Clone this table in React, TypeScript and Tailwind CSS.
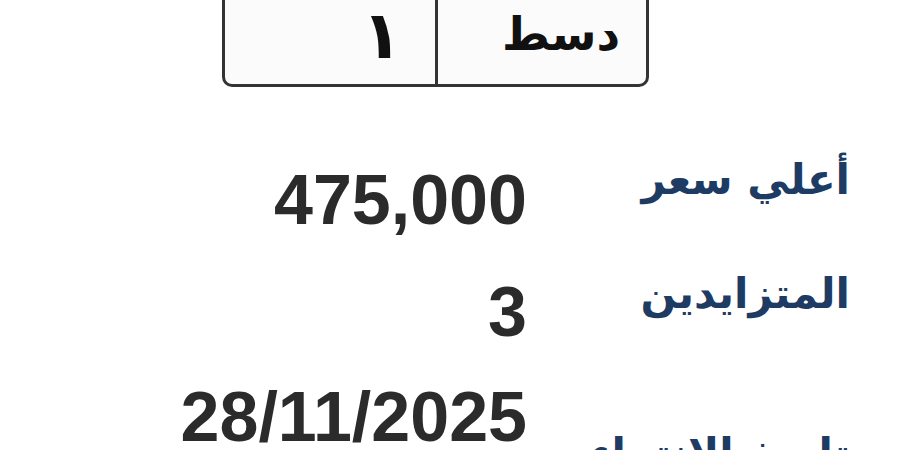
const rows = [
  { label: "أعلي سعر", value: "475,000", h: "h-[112px]", lpt: "pt-[20px]" },
  { label: "المتزايدين", value: "3", h: "h-[105px]", lpt: "pt-[22px]" },
  { label: "تاريخ الانتهاء", value: "28/11/2025", h: "h-[120px]", lpt: "pt-[77px]" },
];

const App = () => {
  return (
    <div className="w-[900px] h-[450px] overflow-hidden bg-white font-['Liberation_Sans',sans-serif]">
      {/* plate */}
      <div className="ml-[222px] -mt-[30px] w-[427px] h-[117px] flex border-[3px] border-[#333] rounded-b-[10px] bg-[#fbfbfb]">
        <div className="w-[210px] h-full flex items-center justify-center pl-[104px] pt-[14px]">
          <span className="font-['DejaVu_Sans',sans-serif] font-bold text-[66px] leading-none text-[#111]">
            ١
          </span>
        </div>
        <div className="w-[3px] h-full bg-[#333]" />
        <div dir="rtl" className="flex-1 h-full flex items-center pr-[26px] pt-[10px]">
          <span className="font-['DejaVu_Sans',sans-serif] font-bold text-[46px] leading-none text-[#111]">
            دسط
          </span>
        </div>
      </div>

      {/* details */}
      <div className="mt-[52px] flex flex-col">
        {rows.map((r) => (
          <div key={r.label} className={`flex ${r.h}`}>
            <div className="w-[527px] text-right pt-[26px]">
              <span className="font-bold text-[70px] leading-none text-[#2b2b2b]">{r.value}</span>
            </div>
            <div dir="rtl" className={`w-[323px] ml-auto mr-[50px] ${r.lpt}`}>
              <span className="font-['DejaVu_Sans',sans-serif] font-bold text-[42px] leading-none text-[#1d3b63] whitespace-nowrap">
                {r.label}
              </span>
            </div>
          </div>
        ))}
      </div>
    </div>
  );
};

export default App;
